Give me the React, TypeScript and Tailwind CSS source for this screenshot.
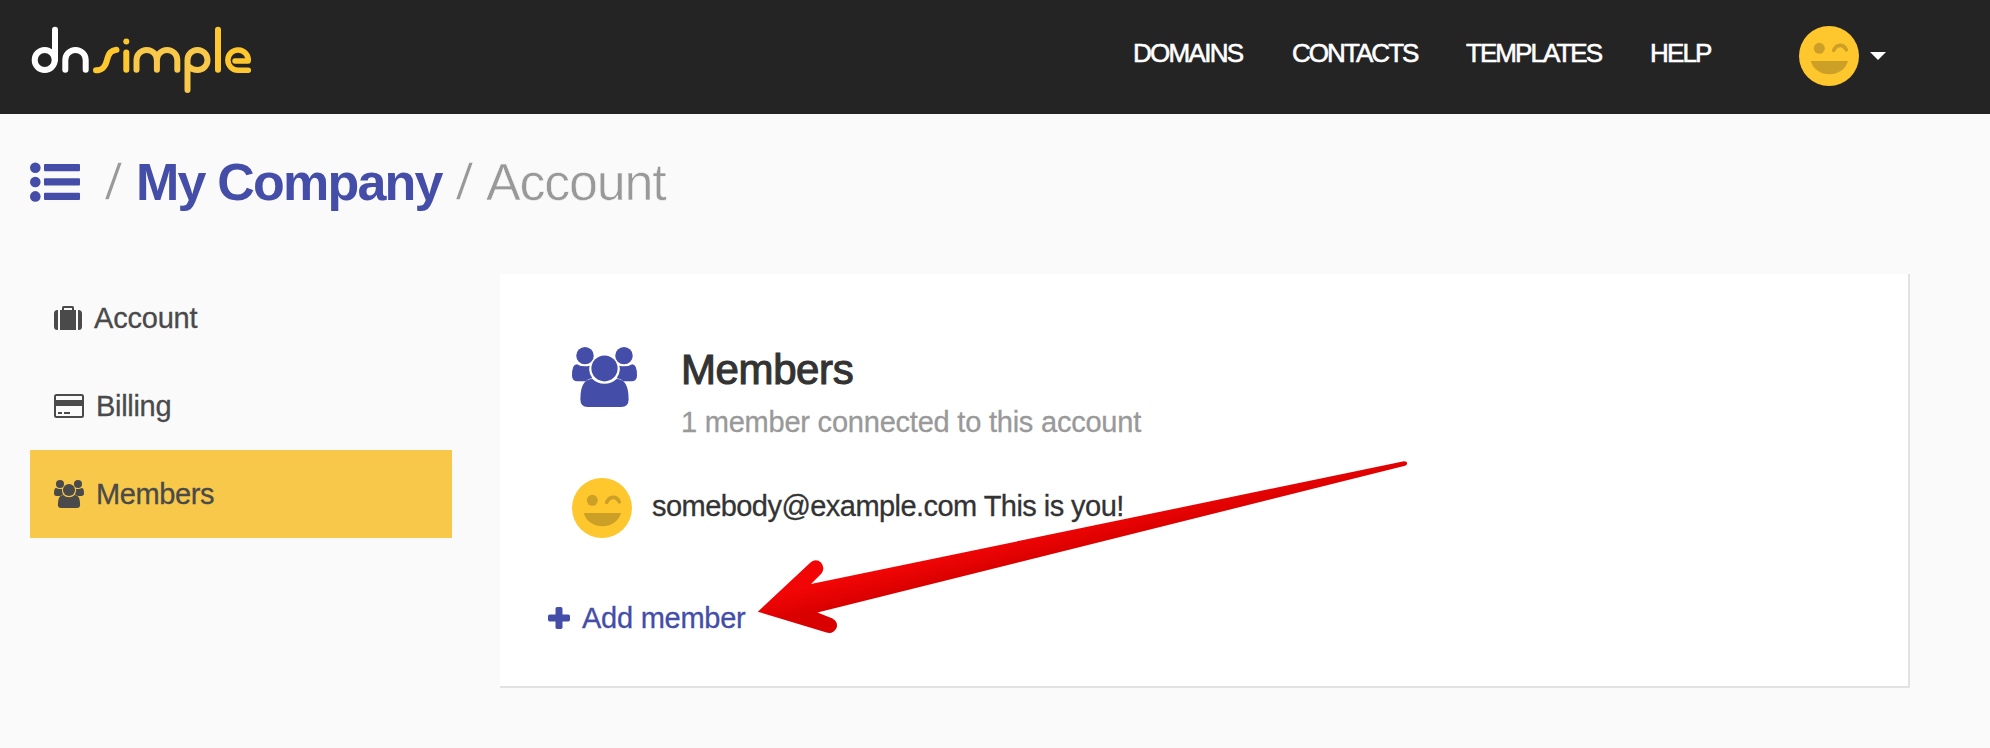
import React from "react";

function UsersIcon({ className }: { className: string }) {
  return (
    <svg viewBox="0 0 64.5 60.2" preserveAspectRatio="none" fill="currentColor" className={className}>
      <circle cx="12.900" cy="8.700" r="8.700" />
      <circle cx="51.600" cy="8.700" r="8.700" />
      <circle cx="32.250" cy="21.500" r="13" />
      <path d="M4.800 17.200Q8.500 19.400 12.900 19.400Q15.500 19.400 17.600 18.800Q17 20.500 17 22.500Q17.300 27.500 20.200 31.400Q16.500 31.600 13.500 34.300H5.500Q0 34.300 0 28.500Q0 17.200 4.800 17.200z" />
      <path d="M59.700 17.200Q56 19.400 51.600 19.400Q49 19.400 46.900 18.800Q47.500 20.500 47.500 22.500Q47.200 27.500 44.300 31.400Q48 31.600 51 34.300H59Q64.500 34.300 64.500 28.500Q64.500 17.200 59.700 17.200z" />
      <path d="M20.300 32.200Q25 36.900 32.250 36.900T44.200 32.200Q56.200 32.200 56.200 52.500Q56.200 60.200 49 60.200H15.500Q8.300 60.200 8.300 52.500Q8.300 32.200 20.300 32.200z" />
    </svg>
  );
}

function SuitcaseIcon() {
  return (
    <svg viewBox="0 0 28 24" fill="currentColor" className="h-6 w-7">
      <path d="M4 4v20H3.500A3.500 3.500 0 0 1 0 20.500v-13A3.500 3.500 0 0 1 3.500 4zM24 4v20h.5a3.500 3.500 0 0 0 3.500-3.500v-13A3.500 3.500 0 0 0 24.500 4z" />
      <path d="M6 24V4h2V1.500A1.500 1.500 0 0 1 9.500 0h9A1.500 1.500 0 0 1 20 1.500V4h2v20zM10 4h8V2h-8z" fillRule="evenodd" />
    </svg>
  );
}

function CardIcon() {
  return (
    <svg viewBox="0 0 30 24" fill="currentColor" className="h-6 w-[30px]">
      <path
        fillRule="evenodd"
        d="M2.500 0h25A2.500 2.500 0 0 1 30 2.500v19a2.500 2.500 0 0 1-2.500 2.500h-25A2.500 2.500 0 0 1 0 21.500v-19A2.500 2.500 0 0 1 2.500 0zM2.500 2Q2 2 2 2.500V6h26V2.500Q28 2 27.500 2zM2 12v9.500q0 .5.5.5h25q.5 0 .5-.5V12zM4 18h4v2H4zM10 18h6v2h-6z"
      />
    </svg>
  );
}

function Avatar() {
  return (
    <svg viewBox="0 0 60 60" className="size-[60px] shrink-0">
      <circle cx="30" cy="30" r="30" fill="#ffc72e" />
      <circle cx="20.300" cy="22.300" r="5.500" fill="#cca027" />
      <path d="M34.700 24.300c3-6.400 9.600-6.600 12.600-.5" fill="none" stroke="#cca027" strokeWidth="3.600" strokeLinecap="round" />
      <path d="M11.700 35h37.300c-2.500 8.500-10 13.300-18.600 13.300S14.200 43.500 11.700 35z" fill="#cca027" />
    </svg>
  );
}

function Logo() {
  return (
    <svg viewBox="0 0 230 70" className="mt-1 ml-[30px] h-[70px] w-[230px]" fill="none" strokeWidth="6" strokeLinecap="round">
      <g stroke="#ffffff">
        <circle cx="14.700" cy="36" r="10" />
        <path d="M25 5.700V36M35.300 45.700V36a10.200 10 0 0 1 20.400 0v9.700" />
      </g>
      <g stroke="#ffc72e">
        <path d="M66 46.300c6.500 0 9.200-3 11-10.300s4.300-9.500 9.500-10.200" />
        <path d="M96.300 28.500v17.200M188 5.700v40" />
        <path d="M218.300 46.300H208.500a10.200 10.200 0 1 1 9.700-9.300H205" strokeLinejoin="round" strokeWidth="5.500" />
      </g>
      <circle cx="96.300" cy="17.400" r="3" fill="#ffc72e" />
      <g stroke="#f8c84a">
        <path d="M106.500 45.700V36a10.200 10 0 0 1 20.400 0v9.700M126.900 36a10.200 10 0 0 1 20.400 0v9.700" />
        <path d="M157.500 66V36a10 10 0 1 1 10 10q-5 0-8-3" />
      </g>
    </svg>
  );
}

function Slash({ className }: { className: string }) {
  return (
    <span className={`w-[14px] origin-left scale-x-[1.3] [-webkit-text-stroke:1.3px_#fafafa] ${className}`}>/</span>
  );
}

const NAV = [
  { label: "DOMAINS", width: "w-[159px] tracking-[-1.7px]" },
  { label: "CONTACTS", width: "w-[174px] tracking-[-1.95px]" },
  { label: "TEMPLATES", width: "w-[184px] tracking-[-1.95px]" },
  { label: "HELP", width: "w-[149px] tracking-[-1.85px]" },
];

const MENU = [
  { label: "Account", icon: <SuitcaseIcon />, style: "gap-[12px] tracking-[-0.2px]" },
  { label: "Billing", icon: <CardIcon />, style: "gap-[12px] tracking-[-0.3px]" },
  { label: "Members", icon: <UsersIcon className="h-7 w-[30px]" />, style: "gap-[12px] tracking-[-0.4px] bg-[#f8c84a]" },
];

export default function App() {
  return (
    <div className="h-[748px] w-[1990px] overflow-hidden bg-[#fafafa] font-['Liberation_Sans',Arial,sans-serif] text-[29px] leading-[40px] whitespace-nowrap">
      <header className="flex h-[114px] items-center justify-between bg-[#242424]">
        <Logo />
        <div className="flex items-center pr-[104px] pb-[2px]">
          <nav className="flex pb-[7px] text-[26px] text-white [-webkit-text-stroke:0.6px_#fff]">
            {NAV.map((item) => (
              <a key={item.label} className={item.width}>
                {item.label}
              </a>
            ))}
          </nav>
          <Avatar />
          <svg viewBox="0 0 16 8" className="ml-[11px] h-2 w-4" fill="#fff">
            <path d="M0 0h16L8 8z" />
          </svg>
        </div>
      </header>

      <h1 className="flex h-[136px] items-center pl-[30px] text-[52px] text-[#999]">
        <svg viewBox="0 0 50 40" className="h-10 w-[50px]" fill="#444da8">
          <circle cx="5.300" cy="5.700" r="5.300" />
          <circle cx="5.300" cy="20" r="5.300" />
          <circle cx="5.300" cy="34.400" r="5.300" />
          <rect x="14" y="2" width="36" height="7.300" rx="1" />
          <rect x="14" y="16.300" width="36" height="7.300" rx="1" />
          <rect x="14" y="30.700" width="36" height="7.300" rx="1" />
        </svg>
        <Slash className="ml-[24px]" />
        <a className="ml-[18px] w-[310px] font-bold tracking-[-1.8px] text-[#444da8]">My Company</a>
        <Slash className="ml-[9px]" />
        <span className="ml-[17px] tracking-[-1.2px] [-webkit-text-stroke:0.6px_#fafafa]">Account</span>
      </h1>

      <main className="mt-6 flex pl-[30px]">
        <aside className="w-[422px] text-[#4a4a4a] [-webkit-text-stroke:0.3px_#4a4a4a]">
          {MENU.map((item) => (
            <a key={item.label} className={`flex h-[88px] items-center pl-6 ${item.style}`}>
              {item.icon}
              <span>{item.label}</span>
            </a>
          ))}
        </aside>

        <section className="relative ml-12 h-[414px] w-[1410px] border-r-2 border-b-2 border-[#e2e2e2] bg-white">
          <div className="flex pt-[72px] pl-[72px]">
            <UsersIcon className="mt-px h-[60px] w-[65px] text-[#444da8]" />
            <div className="ml-[44px]">
              <h2 className="pt-px text-[42px] leading-[46px] tracking-[-0.4px] text-[#333] [-webkit-text-stroke:1.1px_#333]">Members</h2>
              <p className="mt-[9px] tracking-[-0.22px] text-[#999] [-webkit-text-stroke:0.3px_#999]">1 member connected to this account</p>
            </div>
          </div>
          <div className="mt-[36px] flex items-center pl-[72px]">
            <Avatar />
            <span className="mb-[4px] ml-[20px] tracking-[-0.55px] text-[#333] [-webkit-text-stroke:0.3px_#333]">
              somebody@example.com This is you!
            </span>
          </div>
          <a className="mt-[60px] flex items-center pl-[48px] text-[#444da8]">
            <svg viewBox="0 0 22 22" className="mb-px h-[22px] w-[22px]" fill="currentColor">
              <rect x="7.500" width="7" height="22" rx="1.700" />
              <rect y="7.500" width="22" height="7" rx="1.700" />
            </svg>
            <span className="ml-[12px] tracking-[-0.25px] [-webkit-text-stroke:0.3px_#444da8]">Add member</span>
          </a>
          <svg viewBox="750 450 670 200" className="pointer-events-none absolute top-[176px] left-[250px] h-[200px] w-[670px]">
            <defs>
              <linearGradient id="arrow" gradientUnits="userSpaceOnUse" x1="930" y1="558" x2="936" y2="583">
                <stop offset="0" stopColor="#f20505" />
                <stop offset="1" stopColor="#d90000" />
              </linearGradient>
            </defs>
            <path
              d="M757.800 611.700L810.500 562.500Q816 558 821 562.500Q825.500 568 821.500 573.500L811 584L1404 461.300Q1407.500 461.500 1407 464Q1406.500 465.500 1405 465.800L817.500 612.600L832.500 618.500Q838.500 622 836.500 628Q833 634.500 826.500 632.500Z"
              fill="url(#arrow)"
            />
          </svg>
        </section>
      </main>
    </div>
  );
}
